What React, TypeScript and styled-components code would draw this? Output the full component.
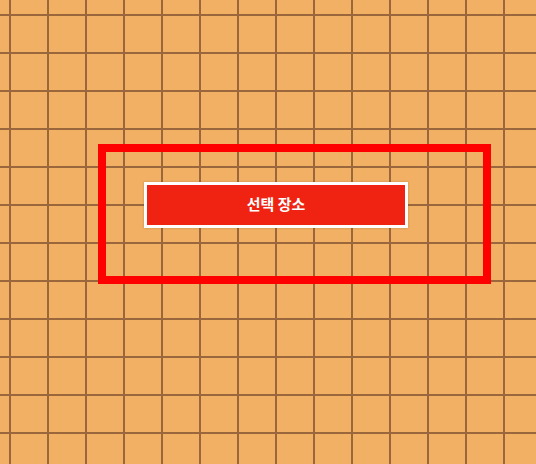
import React from 'react';
import styled, { createGlobalStyle } from 'styled-components';

const CELL = 38;
const LINE = '#9a663c';

const GlobalStyle = createGlobalStyle`
  html, body {
    margin: 0;
    padding: 0;
    width: 100%;
    height: 100%;
    overflow: hidden;
  }
  #root {
    width: 100%;
    height: 100%;
  }
`;

const Board = styled.div`
  position: relative;
  width: 536px;
  height: 464px;
  background-color: #f1b063;
  background-image:
    linear-gradient(to right, ${LINE} 2px, transparent 2px),
    linear-gradient(to bottom, ${LINE} 2px, transparent 2px);
  background-size: ${CELL}px ${CELL}px;
  background-position: 9px 14px;
  font-family: 'Noto Sans CJK KR', 'Noto Sans', sans-serif;
`;

// selection frame drawn over the board
const Selection = styled.div<{ $x: number; $y: number; $w: number; $h: number }>`
  position: absolute;
  left: ${p => p.$x}px;
  top: ${p => p.$y}px;
  width: ${p => p.$w}px;
  height: ${p => p.$h}px;
  box-sizing: border-box;
  border: 8px solid #ff0000;
`;

const PlaceButton = styled.button<{ $x: number; $y: number }>`
  position: absolute;
  left: ${p => p.$x}px;
  top: ${p => p.$y}px;
  width: 264px;
  height: 46px;
  box-sizing: border-box;
  border: 3px solid #ffffff;
  background: #f02312;
  color: #ffffff;
  font-family: inherit;
  font-size: 15px;
  font-weight: 700;
  display: flex;
  align-items: center;
  justify-content: center;
  padding: 0 0 4px;
  box-shadow: 0 0 2px rgba(120, 70, 20, 0.35);
  cursor: pointer;
`;

const App: React.FC = () => {
  return (
    <>
      <GlobalStyle />
      <Board>
        <Selection $x={98} $y={144} $w={393} $h={140} />
        <PlaceButton $x={144} $y={182}>선택 장소</PlaceButton>
      </Board>
    </>
  );
};

export default App;
